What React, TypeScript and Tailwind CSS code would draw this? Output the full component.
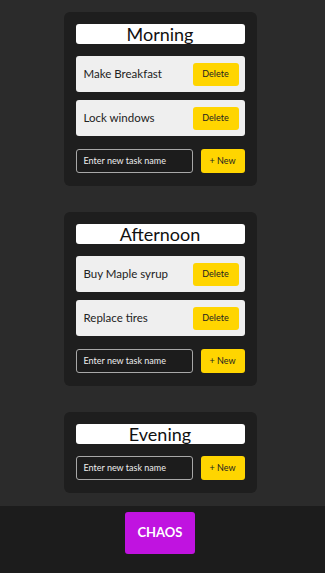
import React from 'react';

type Section = { title: string; tasks: string[] };

const sections: Section[] = [
  { title: 'Morning', tasks: ['Make Breakfast', 'Lock windows'] },
  { title: 'Afternoon', tasks: ['Buy Maple syrup', 'Replace tires'] },
  { title: 'Evening', tasks: [] },
];

const TaskCard: React.FC<{ section: Section }> = ({ section }) => (
  <div className="w-[193px] bg-[#1e1e1e] rounded-md px-3 pt-3 pb-[13px] flex flex-col">
    <h2 className="h-5 bg-white rounded-[3px] text-center text-[18px] leading-5 text-[#111]">
      {section.title}
    </h2>
    {section.tasks.length > 0 && (
      <div className="mt-3 flex flex-col gap-2">
        {section.tasks.map((t) => (
          <div key={t} className="h-9 bg-[#efefef] rounded-[3px] flex items-center justify-between pl-2 pr-[6px]">
            <span className="text-[11.5px] text-[#222]">{t}</span>
            <button className="w-[46px] h-[23px] bg-[#ffd500] rounded-[3px] text-[9px] text-[#222]">Delete</button>
          </div>
        ))}
      </div>
    )}
    <div className={`flex items-center justify-between ${section.tasks.length ? 'mt-[13px]' : 'mt-3'}`}>
      <div className="w-[117px] h-6 border border-[#a8a8a8] rounded-[3px] bg-[#1c1c1c] flex items-center pl-[7px]">
        <span className="text-[9px] text-[#eee]">Enter new task name</span>
      </div>
      <button className="w-11 h-6 bg-[#ffd500] rounded-[3px] text-[9px] text-[#222]">+ New</button>
    </div>
  </div>
);

export default function App() {
  return (
    <div className="min-h-[573px] bg-[#2b2b2b] flex flex-col" style={{ fontFamily: 'Lato, "Noto Sans", sans-serif' }}>
      <main className="flex flex-col items-center gap-[26px] pt-3 pb-[13px] pr-[5px]">
        {sections.map((s) => (
          <TaskCard key={s.title} section={s} />
        ))}
      </main>
      <footer className="flex-1 bg-[#1c1c1c] flex justify-center pt-[6px] pr-[5px]">
        <button className="w-[70px] h-[42px] bg-[#c013e0] rounded-[3px] text-white text-[13px] font-bold">CHAOS</button>
      </footer>
    </div>
  );
}
